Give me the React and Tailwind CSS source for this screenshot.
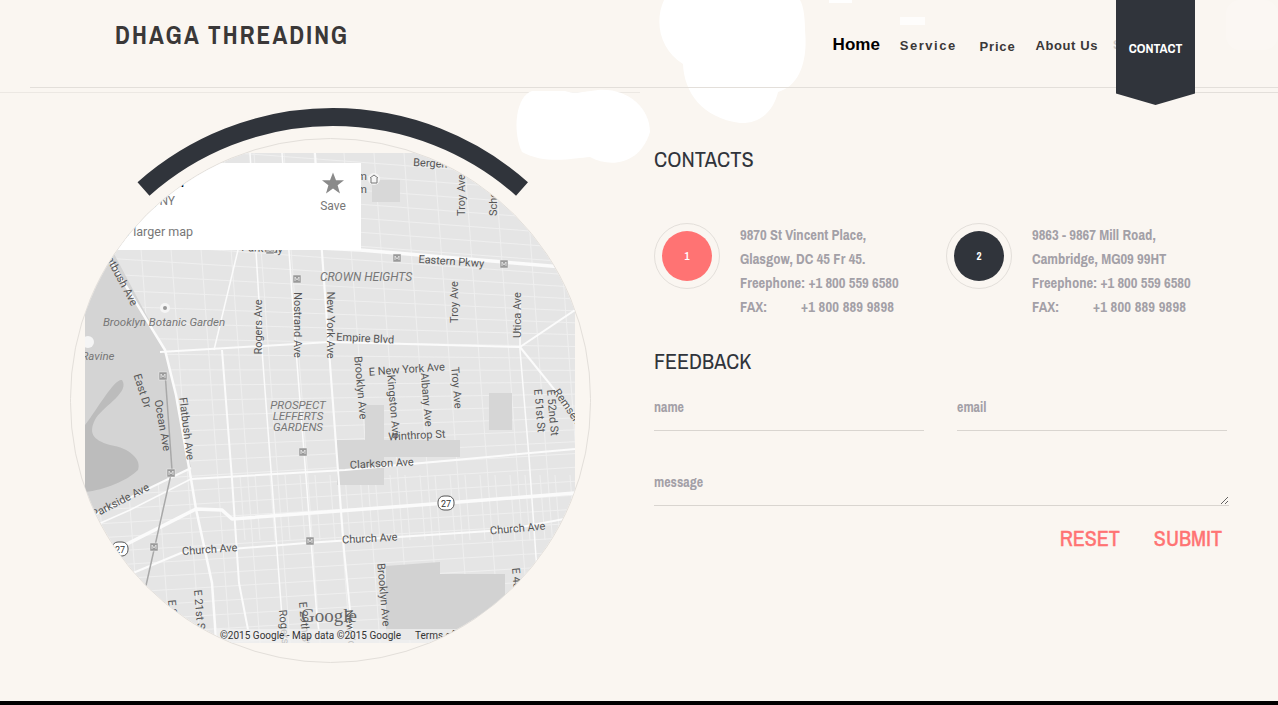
const narrow = "font-['Liberation_Sans_Narrow','Archivo_Narrow','Liberation_Sans',sans-serif]";

const minorH = Array.from({ length: 36 }, (_, i) => 160 + i * 14);
const minorV = Array.from({ length: 17 }, (_, i) => 92 + i * 30);
const denseV = Array.from({ length: 24 }, (_, i) => 240 + i * 15);

const majorRoads = [
  ["M116 238 L360 250 L575 268", 3.5],
  ["M104 250 L165 350 L176 395 L191 479 L196 509 L212 583 L216 640", 2.5],
  ["M160 352 L330 342 L520 347 L575 310", 2],
  ["M520 347 L575 415", 2],
  ["M191 479 L345 470 L575 449", 2],
  ["M575 493 L446 503 L232 519 L222 510 L196 509 L125 545 L85 565", 3.5],
  ["M85 590 L133 573 L181 553 L306 543 L505 530 L575 517", 2],
  ["M94 515 L191 468", 2],
  ["M85 530 L130 510 L191 479", 1.5],
  ["M222 350 L232 479 L239 583 L250 640", 2],
  ["M250 153 L262 350 L282 617 L284 640", 1.5],
  ["M282 153 L296 350 L317 617 L320 640", 1.5],
  ["M315 153 L329 350 L344 550 L353 640", 2],
  ["M520 300 L520 350 L529 457 L536 557 L540 600", 1.5],
  ["M238 250 L214 350", 1.5],
];

const labels = [
  ["Bergen St", 413, 166, 3, "start"],
  ["Museum", 367, 180, 0, "end"],
  ["Museum", 367, 193, 0, "end"],
  ["Troy Ave", 465, 195, -90],
  ["Schenectady Ave", 497, 216, -90, "start"],
  ["Eastern Pkwy", 451, 265, 4],
  ["Parkway", 262, 252, 3],
  ["Troy Ave", 458, 302, -90],
  ["Utica Ave", 521, 315, -90],
  ["Rogers Ave", 262, 327, -90],
  ["Nostrand Ave", 294, 325, 90],
  ["New York Ave", 327, 325, 90],
  ["Empire Blvd", 365, 342, 3],
  ["Flatbush Ave", 102, 251, 62, "start"],
  ["East Dr", 139, 392, 72],
  ["Ocean Ave", 159, 426, 80],
  ["Flatbush Ave", 183, 429, 83],
  ["E New York Ave", 407, 373, -4],
  ["Brooklyn Ave", 357, 388, 85],
  ["Kingston Ave", 390, 407, 85],
  ["Albany Ave", 423, 400, 85],
  ["Troy Ave", 453, 388, 85],
  ["E 52nd St", 549, 413, 85],
  ["E 51st St", 536, 411, 85],
  ["Remsen Ave", 553, 392, 55, "start"],
  ["Winthrop St", 417, 439, -3],
  ["Clarkson Ave", 382, 467, -3],
  ["Parkside Ave", 122, 504, -27],
  ["Church Ave", 210, 553, -4],
  ["Church Ave", 370, 542, -3],
  ["Church Ave", 518, 532, -5],
  ["Brooklyn Ave", 380, 595, 85],
  ["New York Ave", 345, 610, 85, "start"],
  ["E 48th St", 512, 568, 85, "start"],
  ["E 21st St", 194, 590, 85, "start"],
  ["E 22nd St", 168, 600, 85, "start"],
  ["E 29th St", 299, 602, 85, "start"],
  ["Rogers Ave", 279, 610, 85, "start"],
];

const areaLabels = [
  ["Brooklyn Botanic Garden", 164, 326, 11.5],
  ["Ravine", 98, 360, 11.5],
  ["CROWN HEIGHTS", 366, 281, 12],
  ["PROSPECT", 298, 409, 11.5],
  ["LEFFERTS", 298, 420, 11.5],
  ["GARDENS", 298, 431, 11.5],
];

const metros = [[270, 250], [297, 279], [397, 258], [504, 264], [163, 376], [171, 473], [303, 452], [154, 547], [310, 541]];

function MapDrawing() {
  return (
    <svg viewBox="85 153 490 490" className="absolute inset-0 w-full h-full">
      <rect x="85" y="153" width="490" height="490" fill="#e5e5e5" />
      <path d="M510 153 L575 153 L575 290 Z" fill="#dedede" />

      {minorH.map((y) => {
        const slope = y < 250 ? 0.075 : y > 470 ? -0.06 : 0.075 - ((y - 250) / 220) * 0.135;
        return <line key={y} x1="85" y1={y - 245 * slope} x2="575" y2={y + 245 * slope} stroke="#efefef" strokeWidth="1" />;
      })}
      {minorV.map((x) => (
        <line key={x} x1={x - 18} y1="153" x2={x + 18} y2="643" stroke="#efefef" strokeWidth="1" />
      ))}
      {denseV.map((x) => (
        <line key={x} x1={x} y1="475" x2={x + 5} y2="540" stroke="#efefef" strokeWidth="1" />
      ))}

      <path d="M85 245 L112 250 L165 350 L176 395 L191 468 L94 515 L85 520 Z" fill="#d4d4d4" />
      <path d="M85 425 C100 405 115 378 122 380 C130 392 105 405 96 418 C88 432 92 440 110 445 C130 448 142 460 138 470 C128 480 105 490 85 492 Z" fill="#bcbcbc" />
      <rect x="337" y="440" width="123" height="17" fill="#d6d6d6" />
      <rect x="337" y="457" width="47" height="28" fill="#d6d6d6" />
      <rect x="365" y="405" width="19" height="35" fill="#d6d6d6" />
      <rect x="489" y="393" width="23" height="37" fill="#d6d6d6" />
      <path d="M386 566 L440 562 L440 574 L505 574 L505 640 L386 640 Z" fill="#d2d2d2" />
      <rect x="372" y="180" width="28" height="22" fill="#d8d8d8" />

      {majorRoads.map(([d, w], i) => (
        <path key={i} d={d} fill="none" stroke="#fbfbfb" strokeWidth={w} strokeLinejoin="round" />
      ))}
      <path d="M165 372 L172 470 L145 590" fill="none" stroke="#a8a8a8" strokeWidth="1.5" />

      <g fontFamily="Roboto, sans-serif" fontSize="11" fill="#555">
        {labels.map(([text, x, y, rot, anchor], i) => (
          <text key={i} x={x} y={y} textAnchor={anchor || "middle"} transform={`rotate(${rot} ${x} ${y})`}>
            {text}
          </text>
        ))}
      </g>
      <g fontFamily="Roboto, sans-serif" fontStyle="italic" fill="#777" textAnchor="middle">
        {areaLabels.map(([text, x, y, size]) => (
          <text key={text} x={x} y={y} fontSize={size}>
            {text}
          </text>
        ))}
      </g>

      {metros.map(([x, y]) => (
        <g key={`${x}-${y}`}>
          <rect x={x - 4} y={y - 4} width="8" height="8" fill="#9a9a9a" stroke="#eee" strokeWidth="0.5" />
          <path d={`M${x - 2} ${y + 2} V${y - 2} L${x} ${y + 1} L${x + 2} ${y - 2} V${y + 2}`} fill="none" stroke="#eee" strokeWidth="0.8" />
        </g>
      ))}

      {[[446, 503], [120, 549]].map(([x, y]) => (
        <g key={x}>
          <rect x={x - 8} y={y - 7} width="16" height="14" rx="6" fill="#fff" stroke="#555" />
          <text x={x} y={y + 3.5} textAnchor="middle" fontFamily="Roboto, sans-serif" fontSize="9" fill="#333">27</text>
        </g>
      ))}

      <circle cx="374" cy="179" r="6" fill="#f5f5f5" />
      <path d="M370 178 L374 175 L378 178 M371 178 V183 H377 V178" fill="none" stroke="#777" strokeWidth="1" />
      <circle cx="165" cy="308" r="5" fill="#f5f5f5" />
      <circle cx="165" cy="308" r="2" fill="#999" />
      <circle cx="88" cy="342" r="6" fill="#f5f5f5" />

      <text x="329" y="622" textAnchor="middle" fontFamily="'Liberation Serif', serif" fontSize="19" fill="#666">Google</text>
      <rect x="216" y="629" width="250" height="14" fill="#f2f2f2" fillOpacity="0.7" />
      <g fontFamily="Roboto, sans-serif" fontSize="10" fill="#333">
        <text x="220" y="639">©2015 Google - Map data ©2015 Google</text>
        <text x="415" y="639">Terms of Use</text>
      </g>
    </svg>
  );
}

function MapPopup() {
  return (
    <div className="absolute left-0 top-[10px] w-[276px] h-[87px] bg-white font-['Roboto',sans-serif] text-[#777]">
      <p className="absolute right-[177px] top-[12px] text-[14px] font-medium text-black leading-none">Brooklyn</p>
      <p className="absolute right-[186px] top-[32px] text-[12px] leading-none">Brooklyn, NY</p>
      <p className="absolute right-[168px] top-[63px] text-[12.5px] leading-none whitespace-nowrap">View larger map</p>
      <div className="absolute left-[235px] top-[8px] flex flex-col items-center w-[26px]">
        <svg viewBox="0 0 24 24" className="w-6 h-6 fill-[#8a8a8a]">
          <path d="M12 1.5 L15 9.2 L23 9.2 L16.6 14.2 L19 22.5 L12 17.6 L5 22.5 L7.4 14.2 L1 9.2 L9 9.2 Z" />
        </svg>
        <span className="text-[12px] leading-none mt-[5px]">Save</span>
      </div>
    </div>
  );
}

function Address({ num, dot, lines, fax }) {
  return (
    <div className="flex">
      <div className="w-[66px] h-[66px] shrink-0 rounded-full border border-[#e3dfda] flex items-center justify-center">
        <div className={`w-[50px] h-[50px] rounded-full flex items-center justify-center text-white text-[11px] font-bold ${dot}`}>{num}</div>
      </div>
      <div className={`ml-5 text-[14.6px] leading-6 font-bold text-[#a3a0a7] ${narrow}`}>
        {lines.map((l) => (
          <p key={l}>{l}</p>
        ))}
        <p className="flex">
          <span className="w-[61px]">FAX:</span>
          <span className="tracking-[0.2px]">{fax}</span>
        </p>
      </div>
    </div>
  );
}

function Blobs() {
  return (
    <svg className="absolute inset-0 w-full h-full pointer-events-none" viewBox="0 0 1278 705">
      <g fill="#fff">
        <path d="M664 0 C654 22 660 50 683 64 C684 92 702 118 740 123 C764 124 775 106 778 92 C800 86 808 60 805 30 C805 15 803 5 800 0 Z" />
        <path d="M532 91 C516 96 512 130 522 152 C545 165 575 158 590 157 C610 168 640 165 650 132 C650 108 628 88 598 90 C582 92 575 94 565 91 Z" />
        <rect x="829" y="0" width="23" height="3" />
        <rect x="900" y="17" width="25" height="8" fillOpacity="0.8" />
      </g>
      <rect x="1226" y="0" width="52" height="50" rx="14" fill="#fff" fillOpacity="0.2" />
    </svg>
  );
}

export default function App() {
  return (
    <div className="relative w-[1278px] h-[705px] overflow-hidden bg-[#faf6f1] flex flex-col font-['Liberation_Sans',sans-serif]">
      <Blobs />

      <header className="relative ml-[30px] h-[88px] shrink-0 border-b border-[#e3dfda] flex items-start">
        <h1 className={`ml-[85px] mt-[20px] text-[25px] leading-[30px] font-bold tracking-[2.15px] text-[#3a3838] ${narrow}`}>DHAGA THREADING</h1>
        <nav className="ml-auto mr-[83px] flex items-start">
          <a className="mt-[35px] text-[17px] leading-5 font-bold text-black">Home</a>
          <a className="ml-[20px] mt-[38px] text-[13px] leading-4 font-bold tracking-[1.5px] text-[#3a3838]">Service</a>
          <a className="ml-[23px] mt-[39px] text-[13px] leading-4 font-bold tracking-[0.8px] text-[#3a3838]">Price</a>
          <a className="ml-[20px] mt-[38px] text-[13px] leading-4 font-bold tracking-[0.6px] text-[#3a3838]">About Us</a>
          <span className="ml-[15px] mt-[37px] w-[3px] overflow-hidden text-[12px] leading-4 font-bold text-[#cfcbc6]">S</span>
          <a className={`w-[79px] h-[105px] pt-[40px] text-center text-[13.6px] leading-4 font-bold text-white bg-[#30343b] [clip-path:polygon(0_0,100%_0,100%_89%,50%_100%,0_89%)] ${narrow}`}>
            CONTACT
          </a>
        </nav>
      </header>
      <div className="flex justify-between mt-[4px] shrink-0">
        <div className="w-[640px] h-px bg-[#ece8e3]" />
        <div className="w-[83px] h-px bg-[#e3dfda]" />
      </div>

      <main className="relative flex flex-1 pl-[70px] pt-[45px]">
        <div className="relative w-[521px] h-[525px] shrink-0 rounded-full border border-[#e3dfda] overflow-hidden">
          <div className="absolute left-[14px] top-[14px] w-[490px] h-[490px]">
            <MapDrawing />
            <MapPopup />
          </div>
        </div>

        <section className={`ml-[63px] w-[574px] ${narrow}`}>
          <h2 className="mt-[7px] text-[22.4px] leading-[28px] text-[#30343b]">CONTACTS</h2>
          <div className="mt-[50px] flex">
            <div className="w-[292px]">
              <Address num="1" dot="bg-[#ff7373]" lines={["9870 St Vincent Place,", "Glasgow, DC 45 Fr 45.", "Freephone: +1 800 559 6580"]} fax="+1 800 889 9898" />
            </div>
            <Address num="2" dot="bg-[#30343b]" lines={["9863 - 9867 Mill Road,", "Cambridge, MG09 99HT", "Freephone: +1 800 559 6580"]} fax="+1 800 889 9898" />
          </div>
          <h2 className="mt-[28px] text-[22px] leading-[28px] text-[#30343b]">FEEDBACK</h2>
          <form className="mt-[9px]">
            <div className="flex gap-[33px] w-[573px]">
              <input placeholder="name" className="w-[270px] h-[47px] border-b border-[#d9d5d0] bg-transparent text-[14px] font-bold outline-none placeholder:text-[#a3a0a7]" />
              <input placeholder="email" className="w-[270px] h-[47px] border-b border-[#d9d5d0] bg-transparent text-[14px] font-bold outline-none placeholder:text-[#a3a0a7]" />
            </div>
            <textarea placeholder="message" className="block mt-[28px] w-[575px] h-[47px] pt-[13px] border-b border-[#d9d5d0] bg-transparent text-[14px] font-bold outline-none placeholder:text-[#a3a0a7]" />
            <div className="mt-[17px] w-[568px] flex justify-end gap-[34px] text-[22px] leading-[30px] text-[#ff7373] [-webkit-text-stroke:0.4px_#ff7373]">
              <button type="reset">RESET</button>
              <button type="button">SUBMIT</button>
            </div>
          </form>
        </section>
      </main>

      <div className="h-[4px] shrink-0 bg-black" />

      <svg className="absolute inset-0 w-full h-full pointer-events-none" viewBox="0 0 1278 705">
        <path d="M143.5 189 A285 285 0 0 1 522 189" fill="none" stroke="#30343b" strokeWidth="18" />
      </svg>
    </div>
  );
}
